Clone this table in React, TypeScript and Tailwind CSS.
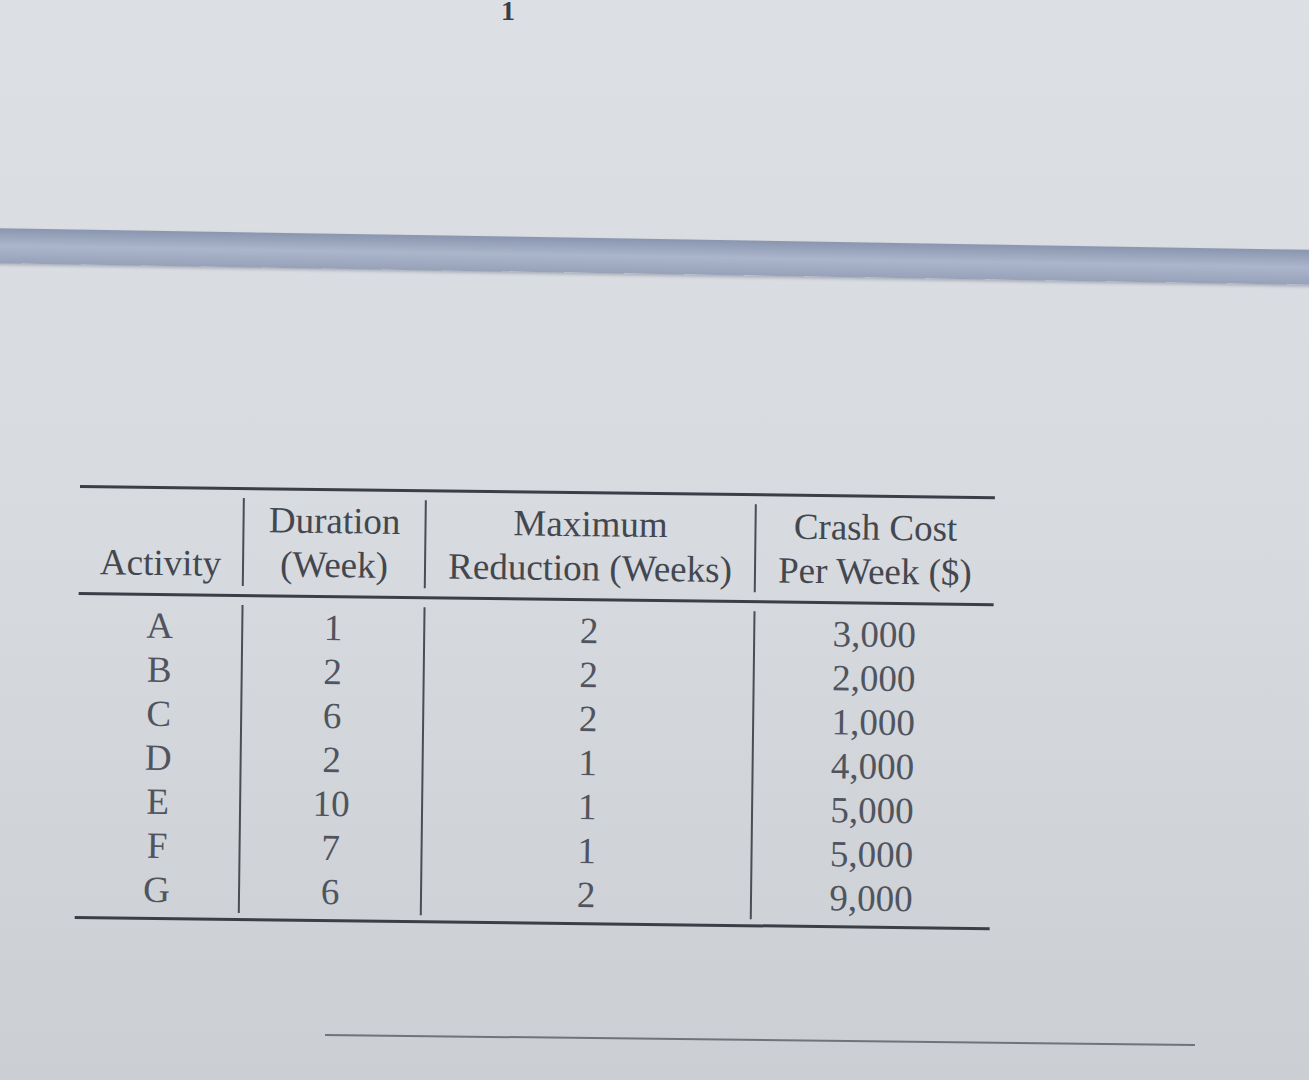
import React from 'react';

const rows = [
  { act: 'A', dur: '1', red: '2', cost: '3,000' },
  { act: 'B', dur: '2', red: '2', cost: '2,000' },
  { act: 'C', dur: '6', red: '2', cost: '1,000' },
  { act: 'D', dur: '2', red: '1', cost: '4,000' },
  { act: 'E', dur: '10', red: '1', cost: '5,000' },
  { act: 'F', dur: '7', red: '1', cost: '5,000' },
  { act: 'G', dur: '6', red: '2', cost: '9,000' },
];

const App = () => {
  return (
    <div className="relative h-[1080px] w-full overflow-hidden bg-gradient-to-b from-[#dcdfe4] via-[#d7dadf] to-[#cbced2] font-['Liberation_Serif',serif] text-[#43474f]">
      {/* page number at the top */}
      <div className="flex h-[20px] items-start pl-[501px]">
        <div className="-mt-[3px] text-[28px] leading-none font-bold text-[#3a3d45]">1</div>
      </div>

      {/* window divider bar */}
      <div className="mt-[208px] -ml-[10px] h-[35px] w-[1340px] origin-left rotate-[0.95deg] bg-gradient-to-b from-[#8a96af] via-[#abb6cc] to-[#97a2b9] shadow-[0_2px_3px_rgba(90,100,120,0.35)]" />

      {/* table */}
      <div className="mt-[222px] ml-[80px] w-[915px] origin-top-left rotate-[0.7deg] text-[37px] leading-[44px]">
        <div className="h-[3px] bg-[#3b3e46]" />

        <div className="py-[6px]">
          <div className="grid grid-cols-[163px_182px_330px_240px] py-[2px]">
            <div className="flex items-end justify-center">Activity</div>
            <div className="border-l-2 border-[#4a4d55] text-center">
              <div>Duration</div>
              <div>(Week)</div>
            </div>
            <div className="border-l-2 border-[#4a4d55] text-center">
              <div>Maximum</div>
              <div>Reduction (Weeks)</div>
            </div>
            <div className="border-l-2 border-[#4a4d55] text-center">
              <div>Crash Cost</div>
              <div>Per Week ($)</div>
            </div>
          </div>
        </div>

        <div className="h-[3px] bg-[#3b3e46]" />

        <div className="pt-[6px] pb-[3px] text-[#50545e]">
          <div className="grid grid-cols-[163px_182px_330px_240px] py-[2px]">
            <div className="text-center">
              {rows.map((r) => (
                <div key={r.act}>{r.act}</div>
              ))}
            </div>
            <div className="border-l-2 border-[#4a4d55] text-center">
              {rows.map((r) => (
                <div key={r.act}>{r.dur}</div>
              ))}
            </div>
            <div className="border-l-2 border-[#4a4d55] text-center">
              {rows.map((r) => (
                <div key={r.act}>{r.red}</div>
              ))}
            </div>
            <div className="border-l-2 border-[#4a4d55] text-center">
              {rows.map((r) => (
                <div key={r.act}>{r.cost}</div>
              ))}
            </div>
          </div>
        </div>

        <div className="h-[3px] bg-[#3b3e46]" />
      </div>

      {/* answer line */}
      <div className="mt-[115px] ml-[325px] h-[2px] w-[870px] origin-left rotate-[0.66deg] bg-[#6f737b]" />
    </div>
  );
};

export default App;
